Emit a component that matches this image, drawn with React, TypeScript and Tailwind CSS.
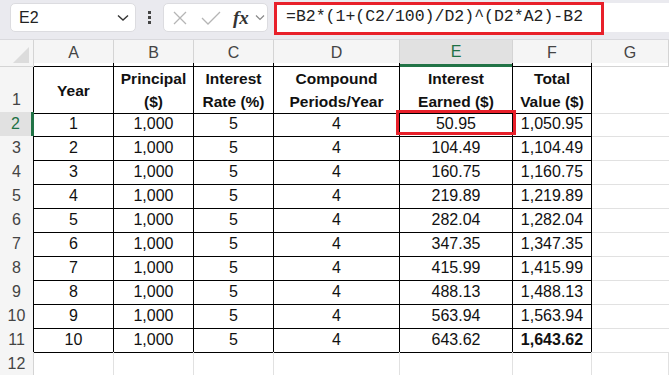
import React from "react";

const COLS = "grid grid-cols-[34px_80px_80px_80px_126px_113px_79px_1fr]";
const LETTERS = ["A", "B", "C", "D", "E", "F", "G"];

const ROWS = [
  [1, "1,000", 5, 4, "50.95", "1,050.95"],
  [2, "1,000", 5, 4, "104.49", "1,104.49"],
  [3, "1,000", 5, 4, "160.75", "1,160.75"],
  [4, "1,000", 5, 4, "219.89", "1,219.89"],
  [5, "1,000", 5, 4, "282.04", "1,282.04"],
  [6, "1,000", 5, 4, "347.35", "1,347.35"],
  [7, "1,000", 5, 4, "415.99", "1,415.99"],
  [8, "1,000", 5, 4, "488.13", "1,488.13"],
  [9, "1,000", 5, 4, "563.94", "1,563.94"],
  [10, "1,000", 5, 4, "643.62", "1,643.62"],
];

const HEADERS = [["Year"], ["Principal", "($)"], ["Interest", "Rate (%)"], ["Compound", "Periods/Year"], ["Interest", "Earned ($)"], ["Total", "Value ($)"]];

function Toolbar() {
  return (
    <div className="h-[40px] bg-[#eaeaef] flex items-start pt-[3px] pl-[10px] border-b border-[#d9d9dd]">
      <div className="w-[126px] h-[29px] bg-white rounded-[5px] border border-[#dcdce0] flex items-center pl-[8px] pr-[6px]">
        <span className="text-[16px] text-[#222]">E2</span>
        <svg className="ml-auto" width="12" height="8" viewBox="0 0 12 8"><path d="M1 1.5 L6 6 L11 1.5" fill="none" stroke="#333" strokeWidth="1.4" /></svg>
      </div>
      <div className="w-[27px] h-[29px] flex flex-col items-center justify-center gap-[2px]">
        <div className="w-[3px] h-[3px] bg-[#444]" />
        <div className="w-[3px] h-[3px] bg-[#444]" />
        <div className="w-[3px] h-[3px] bg-[#444]" />
      </div>
      <div className="w-[105px] h-[29px] bg-white rounded-[5px] border border-[#dcdce0] flex items-center pl-[8px]">
        <svg width="16" height="16" viewBox="0 0 16 16"><path d="M2 2 L14 14 M14 2 L2 14" stroke="#b5b5b5" strokeWidth="1.3" /></svg>
        <svg className="ml-[13px]" width="20" height="16" viewBox="0 0 20 16"><path d="M1 8 L7 14 L19 2" fill="none" stroke="#b5b5b5" strokeWidth="1.3" /></svg>
        <span className="ml-[12px] text-[19px] italic font-bold text-[#333] leading-none" style={{ fontFamily: '"Liberation Serif", serif' }}>fx</span>
        <svg className="ml-[6px]" width="10" height="7" viewBox="0 0 10 7"><path d="M1 1.5 L5 5.5 L9 1.5" fill="none" stroke="#888" strokeWidth="1.2" /></svg>
      </div>
      <div className="ml-[6px] flex-1 h-[29px] bg-white relative">
        <div className="absolute left-0 top-[-1px] w-[330px] h-[33px] border-[3px] border-[#e8202a]" />
        <div className="pl-[12px] h-full flex items-center text-[16.5px] text-[#222]" style={{ fontFamily: '"Liberation Mono", monospace' }}>
          =B2*(1+(C2/100)/D2)^(D2*A2)-B2
        </div>
      </div>
    </div>
  );
}

export default function App() {
  return (
    <div className="w-[669px] h-[375px] overflow-hidden bg-white relative" style={{ fontFamily: '"Liberation Sans", Arial, sans-serif' }}>
      <Toolbar />
      {/* column letters */}
      <div className={`${COLS} h-[23px] bg-[#f5f5f5] text-[16px] text-[#444]`}>
        <div className="border-r border-b border-[#d4d4d4] bg-[#f5f5f5] relative">
          <svg className="absolute right-[4px] bottom-[3px]" width="16" height="16" viewBox="0 0 16 16"><path d="M16 0 L16 16 L0 16 Z" fill="#dcdcdc" /></svg>
        </div>
        {LETTERS.map((l, i) => (
          <div key={l} className={`flex items-center justify-center ${l === "E" ? "bg-[#e1e1e1] text-[#1e7145] border-b-[3px] border-b-[#217346] border-r border-r-[#d4d4d4]" : `border-r border-[#d4d4d4] border-b ${i < 6 ? "border-b-black" : ""}`}`}>
            {l}
          </div>
        ))}
      </div>
      {/* header row */}
      <div className={`${COLS} h-[49px]`}>
        <div className="bg-[#f5f5f5] border-r border-r-black border-b border-b-[#d4d4d4] flex items-end justify-center pb-[1px] text-[16px] text-[#444]">1</div>
        {HEADERS.map((h, i) => (
          <div key={i} className={`border-r border-b border-black flex flex-col items-center pt-[4px] text-[15.5px] font-bold text-[#111] leading-[23px] ${h.length === 1 ? "justify-center" : "justify-start"}`}>
            {h.map(t => <span key={t}>{t}</span>)}
          </div>
        ))}
        <div className="border-b border-[#e1e1e1]" />
      </div>
      {ROWS.map((r, ri) => (
        <div key={ri} className={`${COLS} h-[24px] text-[16px]`}>
          <div className={`flex items-center justify-center ${ri === 0 ? "bg-[#e1e1e1] text-[#1e7145] border-r-[3px] border-r-[#217346]" : "bg-[#f5f5f5] text-[#444] border-r border-r-black"} border-b border-b-[#d4d4d4]`}>
            {ri + 2}
          </div>
          {r.map((v, ci) => (
            <div key={ci} className={`border-r border-b border-black flex items-center justify-center text-[#111] ${ri === 9 && ci === 5 ? "font-bold" : ""}`}>
              {v}
            </div>
          ))}
          <div className="border-b border-[#e1e1e1]" />
        </div>
      ))}
      <div className={`${COLS} h-[24px] text-[16px]`}>
        <div className="bg-[#f5f5f5] text-[#444] border-r border-[#d4d4d4] flex items-center justify-center">12</div>
        {LETTERS.map(l => <div key={l} className="border-r border-[#e1e1e1]" />)}
      </div>
      {/* selected cell highlight */}
      <div className="absolute left-[396px] top-[110px] w-[120px] h-[25px] border-[3px] border-[#e8202a]" />
    </div>
  );
}
